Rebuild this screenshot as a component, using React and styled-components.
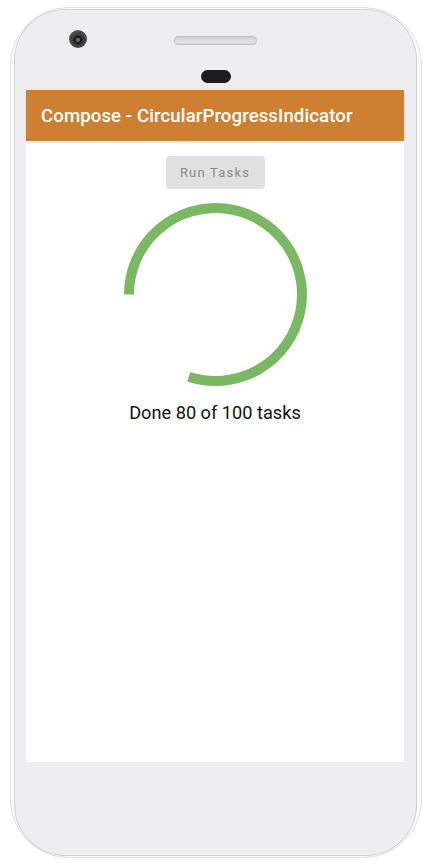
import React from "react";
import styled, { createGlobalStyle } from "styled-components";

const Global = createGlobalStyle`
  html, body { margin: 0; padding: 0; background: #ffffff; }
  body { font-family: Roboto, "Noto Sans", Arial, sans-serif; }
  * { box-sizing: border-box; }
`;

const Page = styled.div`
  width: 426px;
  height: 866px;
  padding: 7px 0 0 10px;
  background: #ffffff;
`;

const PhoneFrame = styled.div`
  width: 412px;
  height: 851px;
  border: 1px solid #e2dfe1;
  border-radius: 58px;
  padding: 2px 5px 2px 4px;
  background: #fbfbfb;
`;

const Face = styled.div`
  width: 401px;
  height: 845px;
  border-radius: 50px;
  background: #eeeef0;
  box-shadow: 0 0 0 1px #d3d0d2;
  display: flex;
  flex-direction: column;
  align-items: center;
`;

const TopBezel = styled.div`
  width: 100%;
  height: 80px;
  display: flex;
  flex-direction: column;
  align-items: center;
`;

const HardwareRow = styled.div`
  width: 100%;
  margin-top: 20px;
  display: grid;
  grid-template-columns: 1fr auto 1fr;
  align-items: center;
`;

const Camera = styled.div`
  justify-self: start;
  margin-left: 54px;
  width: 18px;
  height: 18px;
  border-radius: 50%;
  background: radial-gradient(circle at 50% 55%, #6b6a3a 0 1.5px, #1f1f22 2.5px 4px, #3b3b3f 5px, #505054 9px);
`;

const Speaker = styled.div`
  width: 83px;
  height: 9px;
  margin-top: 3px;
  border-radius: 5px;
  background: linear-gradient(#c8c8cb, #e4e4e6 60%, #d6d6d8);
  box-shadow: inset 0 0 0 1px #c4c4c7;
`;

const Sensor = styled.div`
  margin-top: 22px;
  width: 30px;
  height: 13px;
  border-radius: 7px;
  background: #1d1d1f;
`;

const Screen = styled.div`
  width: 378px;
  height: 672px;
  margin-left: -1px;
  background: #ffffff;
  display: flex;
  flex-direction: column;
`;

const TitleBar = styled.div`
  height: 51px;
  background: #cd7f32;
  display: flex;
  align-items: center;
  padding-left: 15px;
  box-shadow: 0 1px 2px rgba(0, 0, 0, 0.12);
`;

const Title = styled.h1`
  margin: 0;
  color: #ffffff;
  font-family: Roboto, "Noto Sans", sans-serif;
  font-weight: 500;
  font-size: 18.6px;
  letter-spacing: 0.1px;
`;

const Content = styled.div`
  display: flex;
  flex-direction: column;
  align-items: center;
  padding-top: 15px;
`;

const Button = styled.button`
  width: 99px;
  height: 33px;
  border: none;
  border-radius: 4px;
  background: #e0e0e0;
  color: #8c8c8c;
  font-family: Roboto, "Noto Sans", sans-serif;
  font-weight: 400;
  font-size: 13px;
  letter-spacing: 1.2px;
  padding: 0;
`;

const ProgressSvg = styled.svg`
  display: block;
  margin-top: 14px;
`;

const Status = styled.p`
  margin: 16px 0 0;
  font-family: Roboto, "Noto Sans", sans-serif;
  font-size: 18.2px;
  color: #111111;
`;

const BottomBezel = styled.div`
  flex: 1;
`;

function CircularProgress({ done, total, size = 183, stroke = 10, color = "#7cb864" }) {
  const r = (size - stroke) / 2;
  const c = size / 2;
  const startDeg = 180;
  const sweep = (done / total) * 360;
  const endDeg = startDeg + sweep;
  const toPt = (d) => {
    const a = (d * Math.PI) / 180;
    return [c + r * Math.cos(a), c + r * Math.sin(a)];
  };
  const [x1, y1] = toPt(startDeg);
  const [x2, y2] = toPt(endDeg);
  const large = sweep > 180 ? 1 : 0;
  return (
    <ProgressSvg width={size} height={size} viewBox={`0 0 ${size} ${size}`}>
      <path
        d={`M ${x1} ${y1} A ${r} ${r} 0 ${large} 1 ${x2} ${y2}`}
        fill="none"
        stroke={color}
        strokeWidth={stroke}
        strokeLinecap="butt"
      />
    </ProgressSvg>
  );
}

export default function App() {
  const done = 80;
  const total = 100;
  return (
    <>
      <Global />
      <Page>
        <PhoneFrame>
          <Face>
            <TopBezel>
              <HardwareRow>
                <Camera />
                <Speaker />
                <span />
              </HardwareRow>
              <Sensor />
            </TopBezel>
            <Screen>
              <TitleBar>
                <Title>Compose - CircularProgressIndicator</Title>
              </TitleBar>
              <Content>
                <Button>Run Tasks</Button>
                <CircularProgress done={done} total={total} />
                <Status>
                  Done {done} of {total} tasks
                </Status>
              </Content>
            </Screen>
            <BottomBezel />
          </Face>
        </PhoneFrame>
      </Page>
    </>
  );
}
